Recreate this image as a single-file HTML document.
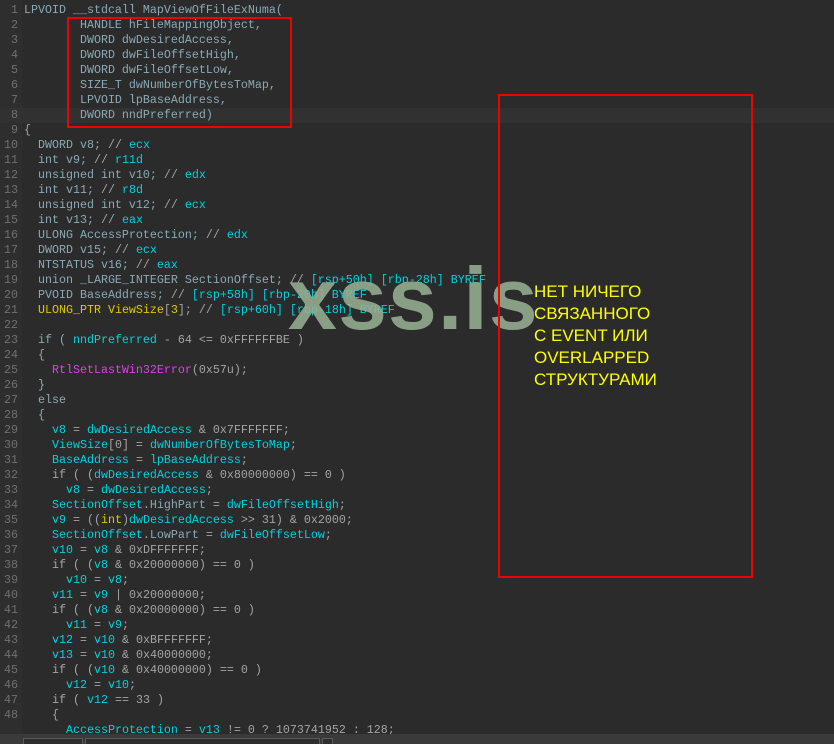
<!DOCTYPE html>
<html><head><meta charset="utf-8"><style>
html,body{margin:0;padding:0;background:#2b2b2b;width:834px;height:744px;overflow:hidden;position:relative}
#g{position:absolute;left:0;top:0;width:22px;height:734px;background:#2e2e2e}
#code{position:absolute;left:0;top:3px;width:834px;font-family:"Liberation Mono",monospace;font-size:11.67px;line-height:15px;color:#8aaab6}
.l{height:15px;white-space:pre}
.n{display:inline-block;width:18px;text-align:right;color:#707070;margin-right:6px}
.c{color:#00d2de}.o{color:#a4a4a4}.y{color:#e0c800}.p{color:#e040e8}
.cur{background:#313131}
.box{position:absolute;border:2px solid #f00000;box-sizing:border-box}
#wm{position:absolute;left:288px;top:255px;font-family:"Liberation Sans",sans-serif;font-weight:bold;font-size:88px;line-height:88px;color:rgba(150,175,146,0.88);letter-spacing:1px;white-space:nowrap}
#yt{position:absolute;left:534px;top:281px;font-family:"Liberation Sans",sans-serif;font-size:17px;line-height:22px;color:#ffff00}
#bar{position:absolute;left:0;top:734px;width:834px;height:10px;background:#3a3a3a}
#bar div{position:absolute;top:4px;height:8px;border:1px solid #5a5a5a;background:#2e2e2e}
</style></head><body>
<div id="g"></div>
<div id="code"><div class="l"><span class="n">1</span>LPVOID __stdcall MapViewOfFileExNuma(</div><div class="l"><span class="n">2</span>        HANDLE hFileMappingObject,</div><div class="l"><span class="n">3</span>        DWORD dwDesiredAccess,</div><div class="l"><span class="n">4</span>        DWORD dwFileOffsetHigh,</div><div class="l"><span class="n">5</span>        DWORD dwFileOffsetLow,</div><div class="l"><span class="n">6</span>        SIZE_T dwNumberOfBytesToMap,</div><div class="l"><span class="n">7</span>        LPVOID lpBaseAddress,</div><div class="l cur"><span class="n">8</span>        DWORD nndPreferred)</div><div class="l"><span class="n">9</span>{</div><div class="l"><span class="n">10</span>  DWORD v8; <span class="o">//</span> <span class="c">ecx</span></div><div class="l"><span class="n">11</span>  int v9; <span class="o">//</span> <span class="c">r11d</span></div><div class="l"><span class="n">12</span>  unsigned int v10; <span class="o">//</span> <span class="c">edx</span></div><div class="l"><span class="n">13</span>  int v11; <span class="o">//</span> <span class="c">r8d</span></div><div class="l"><span class="n">14</span>  unsigned int v12; <span class="o">//</span> <span class="c">ecx</span></div><div class="l"><span class="n">15</span>  int v13; <span class="o">//</span> <span class="c">eax</span></div><div class="l"><span class="n">16</span>  ULONG AccessProtection; <span class="o">//</span> <span class="c">edx</span></div><div class="l"><span class="n">17</span>  DWORD v15; <span class="o">//</span> <span class="c">ecx</span></div><div class="l"><span class="n">18</span>  NTSTATUS v16; <span class="o">//</span> <span class="c">eax</span></div><div class="l"><span class="n">19</span>  union _LARGE_INTEGER SectionOffset; <span class="o">//</span> <span class="c">[rsp+50h] [rbp-28h] BYREF</span></div><div class="l"><span class="n">20</span>  PVOID BaseAddress; <span class="o">//</span> <span class="c">[rsp+58h] [rbp-20h] BYREF</span></div><div class="l"><span class="n">21</span>  <span class="y">ULONG_PTR ViewSize</span><span class="o">[</span><span class="y">3</span><span class="o">]; //</span> <span class="c">[rsp+60h] [rbp-18h] BYREF</span></div><div class="l"><span class="n">22</span></div><div class="l"><span class="n">23</span>  if ( <span class="c">nndPreferred</span> <span class="o">- 64 &lt;= 0xFFFFFFBE )</span></div><div class="l"><span class="n">24</span>  {</div><div class="l"><span class="n">25</span>    <span class="p">RtlSetLastWin32Error</span><span class="o">(0x57u);</span></div><div class="l"><span class="n">26</span>  }</div><div class="l"><span class="n">27</span>  else</div><div class="l"><span class="n">28</span>  {</div><div class="l"><span class="n">29</span>    <span class="c">v8</span> <span class="o">=</span> <span class="c">dwDesiredAccess</span> <span class="o">&amp; 0x7FFFFFFF;</span></div><div class="l"><span class="n">30</span>    <span class="c">ViewSize</span><span class="o">[0] =</span> <span class="c">dwNumberOfBytesToMap</span><span class="o">;</span></div><div class="l"><span class="n">31</span>    <span class="c">BaseAddress</span> <span class="o">=</span> <span class="c">lpBaseAddress</span><span class="o">;</span></div><div class="l"><span class="n">32</span>    <span class="o">if ( (</span><span class="c">dwDesiredAccess</span> <span class="o">&amp; 0x80000000) == 0 )</span></div><div class="l"><span class="n">33</span>      <span class="c">v8</span> <span class="o">=</span> <span class="c">dwDesiredAccess</span><span class="o">;</span></div><div class="l"><span class="n">34</span>    <span class="c">SectionOffset</span><span class="o">.</span>HighPart <span class="o">=</span> <span class="c">dwFileOffsetHigh</span><span class="o">;</span></div><div class="l"><span class="n">35</span>    <span class="c">v9</span> <span class="o">= ((</span><span class="y">int</span><span class="o">)</span><span class="c">dwDesiredAccess</span> <span class="o">&gt;&gt; 31) &amp; 0x2000;</span></div><div class="l"><span class="n">36</span>    <span class="c">SectionOffset</span><span class="o">.</span>LowPart <span class="o">=</span> <span class="c">dwFileOffsetLow</span><span class="o">;</span></div><div class="l"><span class="n">37</span>    <span class="c">v10</span> <span class="o">=</span> <span class="c">v8</span> <span class="o">&amp; 0xDFFFFFFF;</span></div><div class="l"><span class="n">38</span>    <span class="o">if ( (</span><span class="c">v8</span> <span class="o">&amp; 0x20000000) == 0 )</span></div><div class="l"><span class="n">39</span>      <span class="c">v10</span> <span class="o">=</span> <span class="c">v8</span><span class="o">;</span></div><div class="l"><span class="n">40</span>    <span class="c">v11</span> <span class="o">=</span> <span class="c">v9</span> <span class="o">| 0x20000000;</span></div><div class="l"><span class="n">41</span>    <span class="o">if ( (</span><span class="c">v8</span> <span class="o">&amp; 0x20000000) == 0 )</span></div><div class="l"><span class="n">42</span>      <span class="c">v11</span> <span class="o">=</span> <span class="c">v9</span><span class="o">;</span></div><div class="l"><span class="n">43</span>    <span class="c">v12</span> <span class="o">=</span> <span class="c">v10</span> <span class="o">&amp; 0xBFFFFFFF;</span></div><div class="l"><span class="n">44</span>    <span class="c">v13</span> <span class="o">=</span> <span class="c">v10</span> <span class="o">&amp; 0x40000000;</span></div><div class="l"><span class="n">45</span>    <span class="o">if ( (</span><span class="c">v10</span> <span class="o">&amp; 0x40000000) == 0 )</span></div><div class="l"><span class="n">46</span>      <span class="c">v12</span> <span class="o">=</span> <span class="c">v10</span><span class="o">;</span></div><div class="l"><span class="n">47</span>    <span class="o">if (</span> <span class="c">v12</span> <span class="o">== 33 )</span></div><div class="l"><span class="n">48</span>    {</div><div class="l"><span class="n"></span>      <span class="c">AccessProtection</span> <span class="o">=</span> <span class="c">v13</span> <span class="o">!= 0 ? 1073741952 : 128;</span></div></div>
<div id="wm">xss.is</div>
<div class="box" style="left:67px;top:17px;width:225px;height:111px"></div>
<div class="box" style="left:498px;top:94px;width:255px;height:484px"></div>
<div id="yt">НЕТ НИЧЕГО<br>СВЯЗАННОГО<br>С EVENT ИЛИ<br>OVERLAPPED<br>СТРУКТУРАМИ</div>
<div id="bar"><div style="left:23px;width:58px"></div><div style="left:85px;width:233px"></div><div style="left:322px;width:9px"></div></div>
</body></html>
